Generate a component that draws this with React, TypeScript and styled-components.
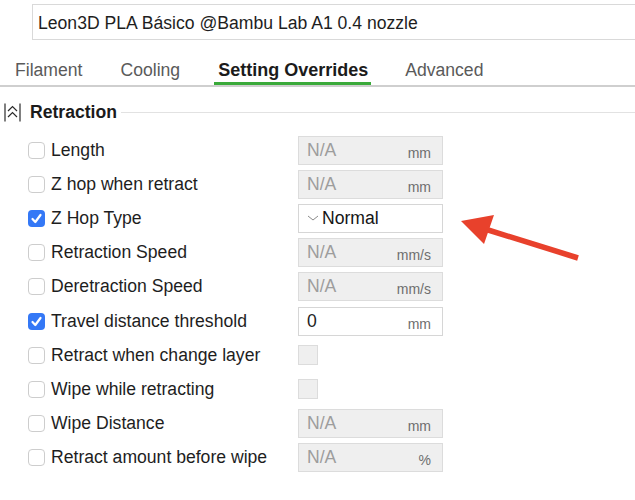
import styled, { createGlobalStyle } from "styled-components";

const GlobalStyle = createGlobalStyle`
  html, body {
    margin: 0;
    padding: 0;
    background: #ffffff;
    overflow: hidden;
  }
  body {
    font-family: "Liberation Sans", Arial, sans-serif;
    color: #1d1d1d;
  }
`;

const Page = styled("div")`
  position: relative;
  width: 635px;
  height: 500px;
  overflow: hidden;
`;

const PresetBox = styled("div")`
  margin: 4px 0 0 32px;
  width: 640px;
  height: 36px;
  box-sizing: border-box;
  border: 1px solid #d9d9d9;
  display: flex;
  align-items: center;
  padding: 2px 0 0 5px;
  font-size: 17.6px;
  color: #1e1e1e;
`;

const TabBar = styled("div")`
  margin-top: 15px;
  height: 30px;
  border-bottom: 2px solid #cfcfcf;
  display: flex;
  align-items: flex-start;
  padding-left: 15px;
`;

const Tab = styled("div")<{ $active?: boolean }>`
  height: 30px;
  box-sizing: border-box;
  padding-top: 5px;
  font-size: ${(p) => (p.$active ? "18px" : "17.6px")};
  font-weight: ${(p) => (p.$active ? 700 : 400)};
  color: ${(p) => (p.$active ? "#1b1b1b" : "#5a5a5a")};
  margin-right: ${(p) => (p.$active ? "34px" : "38px")};
  border-bottom: ${(p) => (p.$active ? "3px solid #3aaa3a" : "none")};
  padding-left: ${(p) => (p.$active ? "4px" : "0")};
  padding-right: ${(p) => (p.$active ? "3px" : "0")};
  margin-left: ${(p) => (p.$active ? "-4px" : "0")};
  white-space: nowrap;
`;

const SectionHeader = styled("div")`
  display: flex;
  align-items: center;
  height: 30px;
  margin-top: 10px;
  padding-left: 4px;
`;

const SectionTitle = styled("div")`
  font-size: 17.6px;
  font-weight: 700;
  margin-left: 9px;
  color: #1b1b1b;
`;

const SectionRule = styled("div")`
  flex: 1;
  height: 1px;
  background: #e2e2e2;
  margin-left: 4px;
`;

const List = styled("div")`
  margin-top: 6px;
  padding-left: 28px;
`;

const Row = styled("div")`
  display: flex;
  align-items: center;
  height: 34.2px;
`;

const Check = styled("div")<{ $on?: boolean }>`
  width: 17px;
  height: 17px;
  box-sizing: border-box;
  border-radius: 4px;
  border: ${(p) => (p.$on ? "none" : "1px solid #cdcdcd")};
  background: ${(p) => (p.$on ? "#3478f6" : "#ffffff")};
  display: flex;
  align-items: center;
  justify-content: center;
  flex-shrink: 0;
`;

const Label = styled("div")`
  width: 247px;
  margin-left: 6px;
  font-size: 17.6px;
  color: #1e1e1e;
  white-space: nowrap;
`;

const Field = styled("div")<{ $enabled?: boolean }>`
  width: 145px;
  height: 29px;
  box-sizing: border-box;
  border: 1px solid ${(p) => (p.$enabled ? "#d6d6d6" : "#dcdcdc")};
  background: ${(p) => (p.$enabled ? "#ffffff" : "#efefef")};
  display: flex;
  align-items: center;
  padding: 0 11px 0 8px;
`;

const Value = styled("div")<{ $enabled?: boolean }>`
  flex: 1;
  font-size: 17.6px;
  color: ${(p) => (p.$enabled ? "#1e1e1e" : "#9d9d9d")};
`;

const Unit = styled("div")`
  font-size: 14px;
  color: #6e6e6e;
  margin-top: 5px;
`;

const SmallBox = styled("div")`
  width: 20px;
  height: 20px;
  box-sizing: border-box;
  border: 1px solid #dcdcdc;
  background: #efefef;
`;

const ComboText = styled("div")`
  font-size: 17.6px;
  color: #151515;
  margin-left: 3px;
`;

const ArrowLayer = styled("svg")`
  position: absolute;
  left: 0;
  top: 0;
  pointer-events: none;
`;

type RowData = {
  label: string;
  checked?: boolean;
  kind: "field" | "combo" | "box";
  value?: string;
  unit?: string;
};

const rows: RowData[] = [
  { label: "Length", kind: "field", unit: "mm" },
  { label: "Z hop when retract", kind: "field", unit: "mm" },
  { label: "Z Hop Type", kind: "combo", checked: true, value: "Normal" },
  { label: "Retraction Speed", kind: "field", unit: "mm/s" },
  { label: "Deretraction Speed", kind: "field", unit: "mm/s" },
  { label: "Travel distance threshold", kind: "field", checked: true, value: "0", unit: "mm" },
  { label: "Retract when change layer", kind: "box" },
  { label: "Wipe while retracting", kind: "box" },
  { label: "Wipe Distance", kind: "field", unit: "mm" },
  { label: "Retract amount before wipe", kind: "field", unit: "%" },
];

const CollapseIcon = () => (
  <svg width="17" height="19" viewBox="0 0 17 19" fill="none" stroke="#2a2a2a" strokeWidth="1.2">
    <line x1="1" y1="0.5" x2="1" y2="18.5" />
    <line x1="16" y1="0.5" x2="16" y2="18.5" />
    <polyline points="4,8 8.5,3.5 13,8" />
    <polyline points="4,14 8.5,9.5 13,14" />
  </svg>
);

const Tick = () => (
  <svg width="13" height="13" viewBox="0 0 13 13" fill="none">
    <polyline points="2.5,7 5.3,10 10.5,3" stroke="#ffffff" strokeWidth="2.2" strokeLinecap="round" strokeLinejoin="round" />
  </svg>
);

const Chevron = () => (
  <svg width="12" height="8" viewBox="0 0 12 8" fill="none">
    <polyline points="1,2 6,6 11,2" stroke="#8a8a8a" strokeWidth="1" />
  </svg>
);

export default function App() {
  return (
    <Page>
      <GlobalStyle />
      <PresetBox>Leon3D PLA Básico @Bambu Lab A1 0.4 nozzle</PresetBox>
      <TabBar>
        <Tab>Filament</Tab>
        <Tab>Cooling</Tab>
        <Tab $active>Setting Overrides</Tab>
        <Tab>Advanced</Tab>
      </TabBar>
      <SectionHeader>
        <CollapseIcon />
        <SectionTitle>Retraction</SectionTitle>
        <SectionRule />
      </SectionHeader>
      <List>
        {rows.map((r) => (
          <Row key={r.label}>
            <Check $on={r.checked}>{r.checked && <Tick />}</Check>
            <Label>{r.label}</Label>
            {r.kind === "field" && (
              <Field $enabled={r.checked}>
                <Value $enabled={r.checked}>{r.value ?? "N/A"}</Value>
                <Unit>{r.unit}</Unit>
              </Field>
            )}
            {r.kind === "combo" && (
              <Field $enabled>
                <Chevron />
                <ComboText>{r.value}</ComboText>
              </Field>
            )}
            {r.kind === "box" && <SmallBox />}
          </Row>
        ))}
      </List>
      <ArrowLayer width="635" height="500" viewBox="0 0 635 500">
        <line x1="578" y1="258" x2="485" y2="229" stroke="#e8412c" strokeWidth="5.5" />
        <polygon points="461,221 494,215 484,244" fill="#e8412c" />
      </ArrowLayer>
    </Page>
  );
}
